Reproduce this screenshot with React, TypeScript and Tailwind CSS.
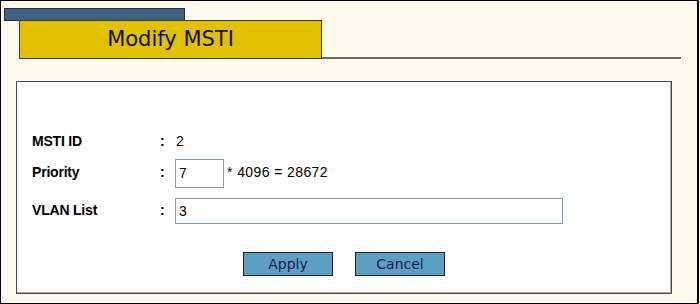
import React from "react";

export default function App() {
  const label = "w-[128px] font-bold text-[14px] leading-4 text-black tracking-[-0.2px]";
  const colon = "w-[15px] font-bold text-[14px] leading-4 text-black";
  return (
    <div className="w-[699px] h-[304px] bg-[#fff9ee] border-t border-l border-b border-r-2 border-black flex flex-col font-['Liberation_Sans',Arial,sans-serif]">
      <div className="ml-[3px] mt-[7px] w-[181px] h-[13px] bg-[#3e6282] border border-[#1e2e3e]" />
      <div className="flex items-end -mt-px">
        <div className="ml-[18px] w-[303px] h-[39px] bg-[#e1c000] border border-[#3a3a30] flex items-center justify-center pb-[1px]">
          <span className="font-['DejaVu_Sans',Verdana,sans-serif] text-[21px] leading-6 text-[#111]">Modify MSTI</span>
        </div>
        <div className="flex-1 mr-[16px] h-[2px] bg-[#6a6a66]" />
      </div>
      <div className="ml-[15px] mt-[22px] w-[656px] h-[213px] bg-white border border-[#4a4a4a] shadow-[inset_-1px_-1px_0_#a8a8a8] pl-[15px] pt-[51px] flex flex-col">
        <div className="flex items-start h-[16px]">
          <div className={label}>MSTI ID</div>
          <div className={colon}>:</div>
          <div className="ml-px text-[14px] leading-4 text-black">2</div>
        </div>
        <div className="flex items-start mt-[10px] h-[29px]">
          <div className={label + " mt-[5px]"}>Priority</div>
          <div className={colon + " mt-[5px]"}>:</div>
          <div className="w-[49px] h-[29px] border border-[#7f9db9] bg-white pl-[3px] flex items-center text-[14px] text-black">7</div>
          <div className="ml-[3px] mt-[5px] text-[14px] leading-4 text-black tracking-[0.4px]">* 4096 = 28672</div>
        </div>
        <div className="flex items-start mt-[10px] h-[26px]">
          <div className={label + " mt-[4px]"}>VLAN List</div>
          <div className={colon + " mt-[4px]"}>:</div>
          <div className="w-[388px] h-[26px] border border-[#7f9db9] bg-white pl-[3px] flex items-center text-[14px] text-black">3</div>
        </div>
        <div className="flex justify-center gap-[22px] mt-[28px] pr-[15px]">
          <button className="w-[90px] h-[24px] bg-[#5d9fc3] border border-[#1e2226] font-['DejaVu_Sans',Verdana,sans-serif] text-[14px] text-[#1a1a4d] leading-5">Apply</button>
          <button className="w-[90px] h-[24px] bg-[#5d9fc3] border border-[#1e2226] font-['DejaVu_Sans',Verdana,sans-serif] text-[14px] text-[#1a1a4d] leading-5">Cancel</button>
        </div>
      </div>
    </div>
  );
}
